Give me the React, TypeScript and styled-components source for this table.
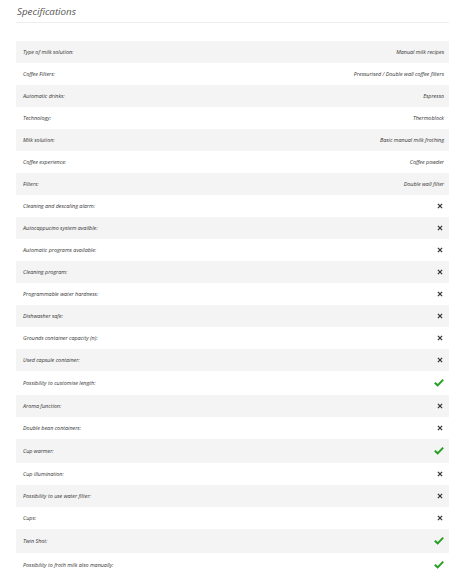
import React from "react";
import styled, { createGlobalStyle } from "styled-components";

const Global = createGlobalStyle`
  html, body { margin: 0; padding: 0; background: #fff; }
  body { font-family: "Open Sans", "DejaVu Sans", sans-serif; }
`;

const Page = styled.div`
  padding: 5px 11px 0 16px;
  width: 433px;
`;

const Title = styled.h2`
  margin: 0;
  font-size: 9.8px;
  line-height: 14px;
  font-weight: 400;
  font-style: italic;
  color: #555;
  padding-left: 1px;
  padding-bottom: 3px;
  border-bottom: 1px solid #eeeeee;
`;

const Table = styled.div`
  margin-top: 18px;
  display: flex;
  flex-direction: column;
`;

const Row = styled.div<{ $shade: boolean }>`
  display: flex;
  align-items: center;
  justify-content: space-between;
  min-height: 22px;
  padding: 0 5px 0 7px;
  background: ${(p) => (p.$shade ? "#f4f4f4" : "#ffffff")};
  font-style: italic;
  font-size: 5.4px;
  color: #333;
`;

const Label = styled.span``;
const Value = styled.span`
  text-align: right;
`;

const Cross = styled.svg`
  width: 6px;
  height: 6px;
  margin-right: 1px;
`;

const Check = styled.svg`
  width: 10px;
  height: 9px;
  margin: 7px 0 8px;
`;

const XIcon = () => (
  <Cross viewBox="0 0 10 10">
    <path d="M1.5 1.5 L8.5 8.5 M8.5 1.5 L1.5 8.5" stroke="#3a3a3a" strokeWidth="2.2" strokeLinecap="butt" />
  </Cross>
);

const CheckIcon = () => (
  <Check viewBox="0 0 12 10">
    <path d="M1 5.2 L4.4 8.4 L11 1.6" fill="none" stroke="#22a022" strokeWidth="2.4" />
  </Check>
);

type V = string | boolean;
const rows: [string, V][] = [
  ["Type of milk solution:", "Manual milk recipes"],
  ["Coffee Filters:", "Pressurised / Double wall coffee filters"],
  ["Automatic drinks:", "Espresso"],
  ["Technology:", "Thermoblock"],
  ["Milk solution:", "Basic manual milk frothing"],
  ["Coffee experience:", "Coffee powder"],
  ["Filters:", "Double wall filter"],
  ["Cleaning and descaling alarm:", false],
  ["Autocappucino system availble:", false],
  ["Automatic programs available:", false],
  ["Cleaning program:", false],
  ["Programmable water hardness:", false],
  ["Dishwasher safe:", false],
  ["Grounds container capacity (n):", false],
  ["Used capsule container:", false],
  ["Possibility to customise length:", true],
  ["Aroma function:", false],
  ["Double bean containers:", false],
  ["Cup warmer:", true],
  ["Cup illumination:", false],
  ["Possibility to use water filter:", false],
  ["Cups:", false],
  ["Twin Shot:", true],
  ["Possibility to froth milk also manually:", true],
];

export default function App() {
  return (
    <>
      <Global />
      <Page>
        <Title>Specifications</Title>
        <Table>
          {rows.map(([label, v], i) => (
            <Row key={label} $shade={i % 2 === 0}>
              <Label>{label}</Label>
              {typeof v === "string" ? <Value>{v}</Value> : v ? <CheckIcon /> : <XIcon />}
            </Row>
          ))}
        </Table>
      </Page>
    </>
  );
}
